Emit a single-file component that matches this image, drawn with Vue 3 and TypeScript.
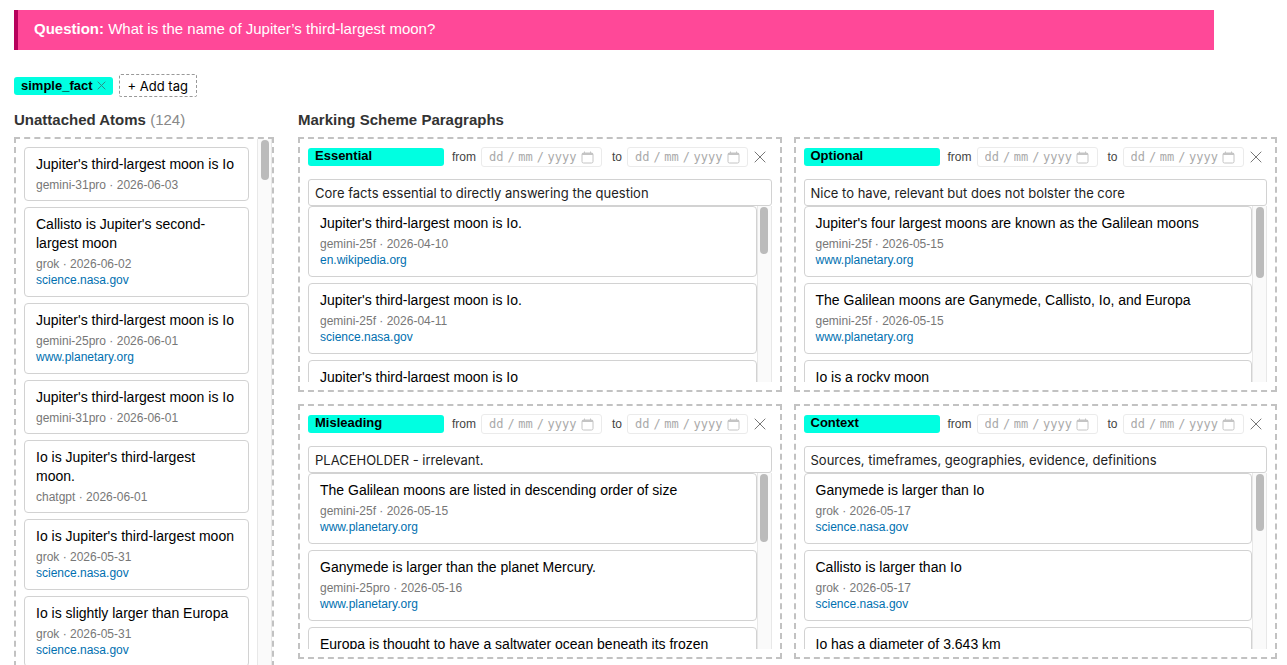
<script setup lang="ts">
interface Atom {
  title: string
  source: string
  date: string
  link?: string
}

interface Paragraph {
  id: string
  name: string
  description: string
  thumb: number
  atoms: Atom[]
}

const unattached: Atom[] = [
  { title: "Jupiter's third-largest moon is Io", source: 'gemini-31pro', date: '2026-06-03' },
  { title: "Callisto is Jupiter's second-largest moon", source: 'grok', date: '2026-06-02', link: 'science.nasa.gov' },
  { title: "Jupiter's third-largest moon is Io", source: 'gemini-25pro', date: '2026-06-01', link: 'www.planetary.org' },
  { title: "Jupiter's third-largest moon is Io", source: 'gemini-31pro', date: '2026-06-01' },
  { title: "Io is Jupiter's third-largest moon.", source: 'chatgpt', date: '2026-06-01' },
  { title: "Io is Jupiter's third-largest moon", source: 'grok', date: '2026-05-31', link: 'science.nasa.gov' },
  { title: 'Io is slightly larger than Europa', source: 'grok', date: '2026-05-31', link: 'science.nasa.gov' },
]

const paragraphs: Paragraph[] = [
  {
    id: 'essential',
    name: 'Essential',
    description: 'Core facts essential to directly answering the question',
    thumb: 27,
    atoms: [
      { title: "Jupiter's third-largest moon is Io.", source: 'gemini-25f', date: '2026-04-10', link: 'en.wikipedia.org' },
      { title: "Jupiter's third-largest moon is Io.", source: 'gemini-25f', date: '2026-04-11', link: 'science.nasa.gov' },
      { title: "Jupiter's third-largest moon is Io", source: 'gemini-25f', date: '2026-04-12' },
    ],
  },
  {
    id: 'optional',
    name: 'Optional',
    description: 'Nice to have, relevant but does not bolster the core',
    thumb: 41,
    atoms: [
      { title: "Jupiter's four largest moons are known as the Galilean moons", source: 'gemini-25f', date: '2026-05-15', link: 'www.planetary.org' },
      { title: 'The Galilean moons are Ganymede, Callisto, Io, and Europa', source: 'gemini-25f', date: '2026-05-15', link: 'www.planetary.org' },
      { title: 'Io is a rocky moon', source: 'gemini-25f', date: '2026-05-15' },
    ],
  },
  {
    id: 'misleading',
    name: 'Misleading',
    description: 'PLACEHOLDER - irrelevant.',
    thumb: 39,
    atoms: [
      { title: 'The Galilean moons are listed in descending order of size', source: 'gemini-25f', date: '2026-05-15', link: 'www.planetary.org' },
      { title: 'Ganymede is larger than the planet Mercury.', source: 'gemini-25pro', date: '2026-05-16', link: 'www.planetary.org' },
      { title: 'Europa is thought to have a saltwater ocean beneath its frozen', source: 'grok', date: '2026-05-17' },
    ],
  },
  {
    id: 'context',
    name: 'Context',
    description: 'Sources, timeframes, geographies, evidence, definitions',
    thumb: 33,
    atoms: [
      { title: 'Ganymede is larger than Io', source: 'grok', date: '2026-05-17', link: 'science.nasa.gov' },
      { title: 'Callisto is larger than Io', source: 'grok', date: '2026-05-17', link: 'science.nasa.gov' },
      { title: 'Io has a diameter of 3,643 km', source: 'grok', date: '2026-05-17' },
    ],
  },
]

const dateEnds = ['from', 'to']
</script>

<template>
  <div class="page">
    <header class="question"><strong>Question:</strong> What is the name of Jupiter’s third-largest moon?</header>

    <div class="tags">
      <span class="tag">
        simple_fact
        <button class="icon-button" type="button" aria-label="Remove tag">
          <svg width="9" height="9" viewBox="0 0 9 9"><path d="M.7.7l7.6 7.6M8.3.7L.7 8.3" /></svg>
        </button>
      </span>
      <button class="add-tag" type="button">+ Add tag</button>
    </div>

    <main class="board">
      <section class="column">
        <h2>Unattached Atoms <span class="count">(124)</span></h2>
        <div class="pool">
          <div class="cards pool-cards">
            <article v-for="(atom, i) in unattached" :key="i" class="card">
              <p class="title">{{ atom.title }}</p>
              <p class="meta">{{ atom.source }} · {{ atom.date }}</p>
              <a v-if="atom.link" class="link" href="#">{{ atom.link }}</a>
            </article>
          </div>
          <div class="track"><div class="thumb" :style="{ height: '40px' }"></div></div>
        </div>
      </section>

      <section class="scheme">
        <h2>Marking Scheme Paragraphs</h2>
        <div class="grid">
          <section v-for="p in paragraphs" :key="p.id" class="panel">
            <div class="head">
              <h3 class="badge">{{ p.name }}</h3>
              <div v-for="end in dateEnds" :key="end" class="range" :class="end">
                <label :for="`${p.id}-${end}`">{{ end }}</label>
                <div class="date">
                  <input :id="`${p.id}-${end}`" class="two" placeholder="dd" />
                  <span>/</span>
                  <input class="two" placeholder="mm" :aria-label="`${end} month`" />
                  <span>/</span>
                  <input class="four" placeholder="yyyy" :aria-label="`${end} year`" />
                  <button class="icon-button calendar" type="button" aria-label="Open calendar">
                    <svg width="13" height="13" viewBox="0 0 13 13">
                      <rect x="1" y="2" width="11" height="10" rx="1.5" />
                      <path class="bar" d="M1 3h11" />
                      <path d="M3.5.5v2M9.5.5v2" />
                    </svg>
                  </button>
                </div>
              </div>
              <button class="icon-button close" type="button" :aria-label="`Remove ${p.name}`">
                <svg width="12" height="12" viewBox="0 0 12 12"><path d="M.7.7l10.6 10.6M11.3.7L.7 11.3" /></svg>
              </button>
            </div>
            <input class="description" :value="p.description" :aria-label="`${p.name} description`" />
            <div class="list">
              <div class="cards">
                <article v-for="(atom, i) in p.atoms" :key="i" class="card">
                  <p class="title">{{ atom.title }}</p>
                  <p class="meta">{{ atom.source }} · {{ atom.date }}</p>
                  <a v-if="atom.link" class="link" href="#">{{ atom.link }}</a>
                </article>
              </div>
              <div class="track"><div class="thumb" :style="{ height: p.thumb + '%' }"></div></div>
            </div>
          </section>
        </div>
      </section>
    </main>
  </div>
</template>

<style>
body {
  margin: 0;
  background: #fff;
}
</style>

<style scoped>
.page {
  padding: 10px 10px 0 14px;
  font-family: "Liberation Sans", Arial, sans-serif;
  font-size: 14px;
  color: #000;
}

.page * {
  box-sizing: border-box;
}

.question {
  max-width: 1200px;
  padding: 9px 16px 11px;
  border-left: 4px solid #b8005c;
  background: #ff4898;
  color: #fff;
  font-size: 15px;
  line-height: 20px;
}

.tags {
  display: flex;
  align-items: center;
  gap: 6px;
  margin-top: 24px;
}

.tag {
  display: flex;
  align-items: center;
  gap: 4px;
  height: 18px;
  padding: 0 7px;
  border-radius: 3px;
  background: #00ffe1;
  font-size: 13px;
  font-weight: 700;
  line-height: 17px;
}

.icon-button {
  display: flex;
  padding: 0;
  border: 0;
  background: none;
}

.icon-button svg {
  fill: none;
  stroke: #2a8f87;
  stroke-width: 1;
}

.add-tag {
  height: 23px;
  padding: 0 8px;
  border: 1px dashed #999;
  border-radius: 2px;
  background: #fff;
  font: 13px/20px Inter, sans-serif;
  color: #000;
}

.board {
  display: flex;
  gap: 24px;
  margin-top: 13px;
}

.column {
  flex: none;
  width: 260px;
}

.scheme {
  flex: 1;
  min-width: 0;
}

h2 {
  margin: 0 0 7px;
  font-size: 15px;
  line-height: 20px;
  color: #333;
}

.count {
  font-weight: 400;
  color: #888;
}

.pool {
  display: flex;
  min-height: 80vh;
  border: 2px dashed #c2c2c2;
}

.cards {
  flex: 1;
  min-width: 0;
  display: flex;
  flex-direction: column;
  gap: 6px;
}

.pool-cards {
  padding: 8px;
}

.card {
  flex: none;
  padding: 7px 11px;
  border: 1px solid #d2d2d2;
  border-radius: 4px;
  background: #fff;
}

.card p {
  margin: 0;
}

.title {
  font-size: 14px;
  line-height: 19px;
}

.card .meta {
  margin-top: 3px;
  font-size: 12px;
  line-height: 16px;
  color: #777;
}

.link {
  display: block;
  font-size: 12px;
  line-height: 17px;
  color: #0070b0;
  text-decoration: none;
}

.track {
  flex: none;
  width: 15px;
  padding: 1px 2px;
  border: solid #e8e8e8;
  border-width: 0 1px;
  background: #fafafa;
}

.thumb {
  width: 8px;
  margin: 0 auto;
  border-radius: 4px;
  background: #bbb;
}

.grid {
  display: grid;
  grid-template-columns: repeat(2, minmax(0, 1fr));
  gap: 12px;
}

.panel {
  padding: 8px;
  border: 2px dashed #c2c2c2;
}

.head {
  display: flex;
  align-items: center;
  height: 20px;
  margin-bottom: 12px;
}

.badge {
  width: 136px;
  height: 18px;
  margin: 0 8px 0 0;
  padding: 0 7px;
  border-radius: 3px;
  background: #00ffe1;
  font-size: 13px;
  line-height: 16px;
}

.range {
  display: flex;
  align-items: center;
  gap: 5px;
  font-size: 12px;
  line-height: 18px;
  color: #444;
}

.range.to {
  margin-left: 10px;
}

.date {
  display: flex;
  align-items: center;
  justify-content: space-between;
  width: 121px;
  height: 20px;
  padding: 0 7px;
  border: 1px solid #ebebeb;
  border-radius: 3px;
  font: 12px/16px "DejaVu Sans Mono", monospace;
  color: #aaa;
}

.date input {
  padding: 0;
  border: 0;
  background: none;
  font: inherit;
  color: inherit;
}

.date input::placeholder {
  color: #aaa;
}

.two {
  width: 15px;
}

.four {
  width: 30px;
}

.calendar svg {
  stroke: #c4c4c4;
}

.calendar .bar {
  stroke-width: 2;
}

.close {
  margin-left: 6px;
}

.close svg {
  stroke: #777;
  stroke-width: 1;
}

.description {
  display: block;
  width: 100%;
  height: 27px;
  padding: 0 6px;
  border: 1px solid #d2d2d2;
  border-radius: 3px;
  background: #fff;
  font: 13px/20px Inter, sans-serif;
  color: #222;
}

.list {
  display: flex;
  height: 176px;
  overflow: hidden;
}
</style>
